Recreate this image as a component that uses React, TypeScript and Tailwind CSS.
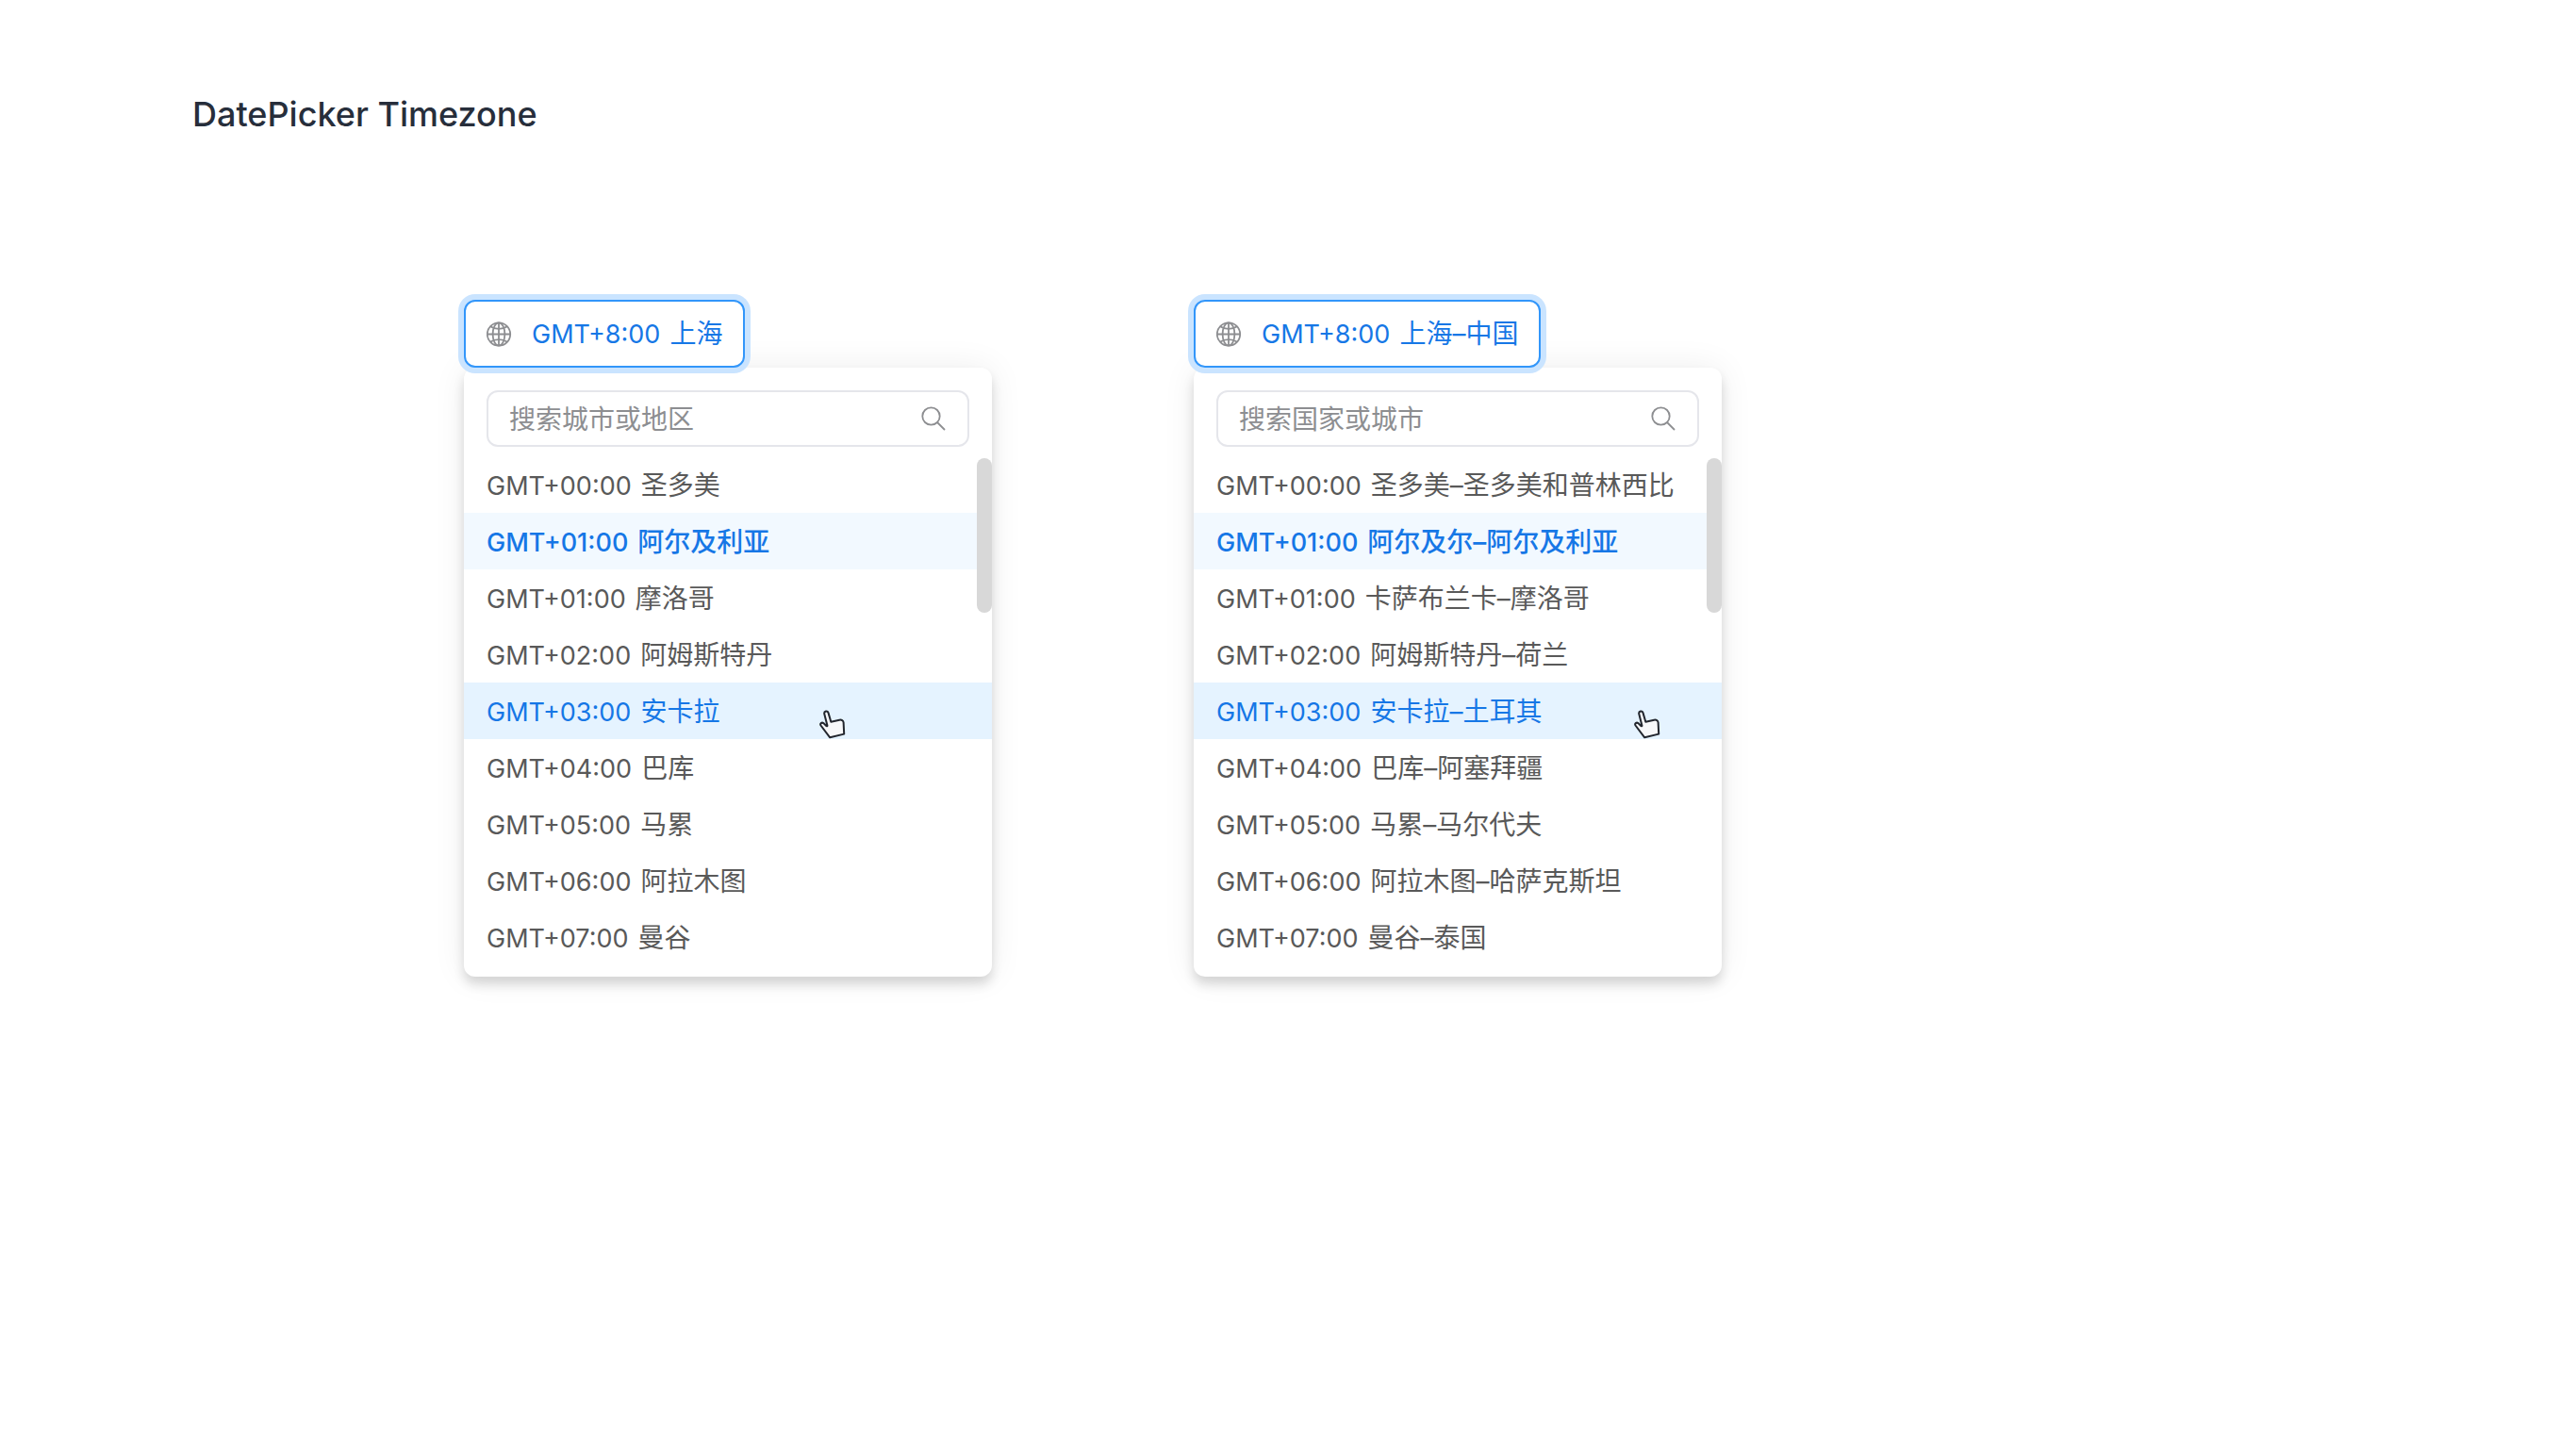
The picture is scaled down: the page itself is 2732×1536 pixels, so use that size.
type Zone = { offset: string; place: string };

type PickerProps = {
  id: string;
  offset: string;
  place: string;
  placeholder: string;
  zones: Zone[];
  selected: number;
  hovered: number;
  cursorClass: string;
};

const cityZones: Zone[] = [
  { offset: 'GMT+00:00', place: '圣多美' },
  { offset: 'GMT+01:00', place: '阿尔及利亚' },
  { offset: 'GMT+01:00', place: '摩洛哥' },
  { offset: 'GMT+02:00', place: '阿姆斯特丹' },
  { offset: 'GMT+03:00', place: '安卡拉' },
  { offset: 'GMT+04:00', place: '巴库' },
  { offset: 'GMT+05:00', place: '马累' },
  { offset: 'GMT+06:00', place: '阿拉木图' },
  { offset: 'GMT+07:00', place: '曼谷' },
];

const countryZones: Zone[] = [
  { offset: 'GMT+00:00', place: '圣多美–圣多美和普林西比' },
  { offset: 'GMT+01:00', place: '阿尔及尔–阿尔及利亚' },
  { offset: 'GMT+01:00', place: '卡萨布兰卡–摩洛哥' },
  { offset: 'GMT+02:00', place: '阿姆斯特丹–荷兰' },
  { offset: 'GMT+03:00', place: '安卡拉–土耳其' },
  { offset: 'GMT+04:00', place: '巴库–阿塞拜疆' },
  { offset: 'GMT+05:00', place: '马累–马尔代夫' },
  { offset: 'GMT+06:00', place: '阿拉木图–哈萨克斯坦' },
  { offset: 'GMT+07:00', place: '曼谷–泰国' },
];

function GlobeIcon() {
  return (
    <svg viewBox="0 0 28 28" className="size-7 shrink-0" fill="none" stroke="#8d8e91" strokeWidth="1.8" aria-hidden="true">
      <circle cx="13" cy="14.5" r="12.2" />
      <ellipse cx="13" cy="14.5" rx="6.4" ry="12.2" />
      <path d="M13 2.300v24.400M.8 14.500h24.400" />
      <path d="M4 6.300c2.400 1.700 5.400 2.600 9 2.600s6.600-.9 9-2.600M4 22.700c2.400-1.700 5.400-2.600 9-2.600s6.600.9 9 2.600" />
    </svg>
  );
}

function SearchIcon() {
  return (
    <svg viewBox="0 0 28 28" className="size-7 shrink-0" fill="none" stroke="#8d8e91" strokeWidth="1.8" aria-hidden="true">
      <circle cx="11.5" cy="11.5" r="9.2" />
      <path d="M18 18 26 26" />
    </svg>
  );
}

function HandCursor() {
  return (
    <svg viewBox="0 0 30 32" className="h-8 w-[30px]" fill="#f7f8fa" stroke="#22262e" strokeWidth="2" strokeLinejoin="round" aria-hidden="true">
      <path d="M12.2 30.300 2.500 17.500c-1.200-2 1.100-3.600 2.800-2.400l3.300 3.100c.6.3.9 0 .8-.6L6.200 5.100C5.800 2.200 9.600 1.400 10.500 4.100l2.800 9.600 9-2c2.300-.4 4 .6 4.300 2.600l.6 12.300Z" />
    </svg>
  );
}

function ZoneLabel({ offset, place }: Zone) {
  return (
    <span className="flex items-baseline gap-2.5 whitespace-nowrap">
      <span className="text-[27px]">{offset}</span>
      <span className="text-[28px]">{place}</span>
    </span>
  );
}

function TimezonePicker({ id, offset, place, placeholder, zones, selected, hovered, cursorClass }: PickerProps) {
  return (
    <section className="flex w-[560px] flex-col items-start">
      <button
        type="button"
        aria-haspopup="listbox"
        aria-controls={id}
        aria-expanded="true"
        className="relative z-10 flex h-[72px] items-center gap-5 rounded-xl border-2 border-[#3296fa] bg-white px-[22px] text-[#1677e6] ring-6 ring-[#cae4ff]"
      >
        <GlobeIcon />
        <ZoneLabel offset={offset} place={place} />
      </button>
      <div className="w-full rounded-xl bg-white pt-6 pb-3 shadow-[0_0_36px_rgba(0,0,0,0.07),0_8px_12px_rgba(0,0,0,0.14)]">
        <label className="mx-6 flex h-[60px] items-center gap-4 rounded-xl border-2 border-[#e5e6eb] px-[22px]">
          <input
            type="text"
            aria-label={placeholder}
            placeholder={placeholder}
            className="min-w-0 flex-1 bg-transparent pt-0.5 text-[28px] leading-10 outline-none placeholder:text-[#8d8e91]"
          />
          <SearchIcon />
        </label>
        <div className="relative mt-2.5">
          <ul id={id} role="listbox" aria-label={placeholder} className="text-[#595959]">
            {zones.map((zone, i) => (
              <li
                key={zone.offset + zone.place}
                role="option"
                aria-selected={i === selected}
                className={
                  i === selected
                    ? 'flex h-[60px] items-center bg-[#f2f9ff] px-6 pt-0.5 font-medium text-[#1677e6]'
                    : i === hovered
                      ? 'relative flex h-[60px] items-center bg-[#e5f3ff] px-6 pt-0.5 text-[#1677e6]'
                      : 'flex h-[60px] items-center px-6 pt-0.5'
                }
              >
                <ZoneLabel offset={zone.offset} place={zone.place} />
                {i === hovered && (
                  <span className={cursorClass}>
                    <HandCursor />
                  </span>
                )}
              </li>
            ))}
          </ul>
          <div className="absolute top-0.5 right-0 h-[164px] w-4 rounded-full bg-[#d8d8d8]" />
        </div>
      </div>
    </section>
  );
}

export default function App() {
  return (
    <main className="min-h-screen bg-white px-[204px] pt-[99px] font-['Inter','Noto_Sans_CJK_SC',sans-serif]">
      <h1 className="text-4xl leading-[44px] font-medium text-[#272e3b]">DatePicker Timezone</h1>
      <div className="mt-[175px] ml-72 flex items-start gap-[214px]">
        <TimezonePicker
          id="city-zones"
          offset="GMT+8:00"
          place="上海"
          placeholder="搜索城市或地区"
          zones={cityZones}
          selected={1}
          hovered={4}
          cursorClass="absolute top-7 right-[154px]"
        />
        <TimezonePicker
          id="country-zones"
          offset="GMT+8:00"
          place="上海–中国"
          placeholder="搜索国家或城市"
          zones={countryZones}
          selected={1}
          hovered={4}
          cursorClass="absolute top-7 right-16"
        />
      </div>
    </main>
  );
}
